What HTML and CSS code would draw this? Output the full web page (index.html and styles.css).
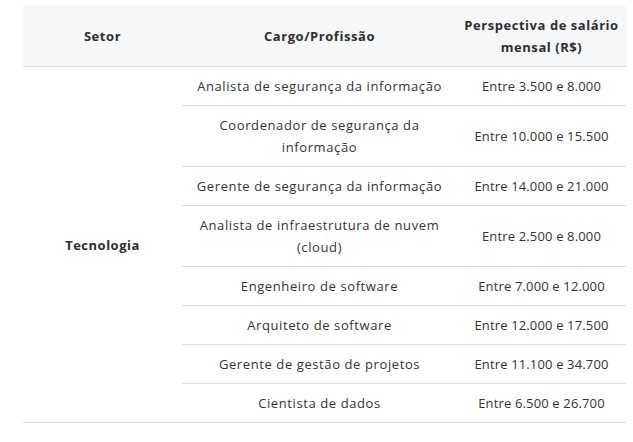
FILE: index.html
```html
<!DOCTYPE html>
<html lang="pt-BR">
<head>
<meta charset="utf-8">
<link rel="stylesheet" href="styles.css">
</head>
<body>
<table class="salary-table">
  <colgroup>
    <col class="col-setor">
    <col class="col-cargo">
    <col class="col-salario">
  </colgroup>
  <thead>
    <tr>
      <th>Setor</th>
      <th>Cargo/Profissão</th>
      <th>Perspectiva de salário<br>mensal (R$)</th>
    </tr>
  </thead>
  <tbody>
    <tr>
      <td class="setor" rowspan="8">Tecnologia</td>
      <td class="cargo">Analista de segurança da informação</td>
      <td class="salario">Entre 3.500 e 8.000</td>
    </tr>
    <tr>
      <td class="cargo">Coordenador de segurança da<br>informação</td>
      <td class="salario">Entre 10.000 e 15.500</td>
    </tr>
    <tr>
      <td class="cargo">Gerente de segurança da informação</td>
      <td class="salario">Entre 14.000 e 21.000</td>
    </tr>
    <tr>
      <td class="cargo">Analista de infraestrutura de nuvem<br>(cloud)</td>
      <td class="salario">Entre 2.500 e 8.000</td>
    </tr>
    <tr>
      <td class="cargo">Engenheiro de software</td>
      <td class="salario">Entre 7.000 e 12.000</td>
    </tr>
    <tr>
      <td class="cargo">Arquiteto de software</td>
      <td class="salario">Entre 12.000 e 17.500</td>
    </tr>
    <tr>
      <td class="cargo">Gerente de gestão de projetos</td>
      <td class="salario">Entre 11.100 e 34.700</td>
    </tr>
    <tr>
      <td class="cargo">Cientista de dados</td>
      <td class="salario">Entre 6.500 e 26.700</td>
    </tr>
  </tbody>
</table>
</body>
</html>
```

FILE: styles.css
```css
html, body {
  margin: 0;
  padding: 0;
  background: #ffffff;
}

body {
  padding: 6px 0 0 23px;
  font-family: "Open Sans", "DejaVu Sans", sans-serif;
  font-size: 13px;
  color: #333333;
}

.salary-table {
  border-collapse: collapse;
  table-layout: fixed;
  width: 603px;
}

.col-setor { width: 159px; }
.col-cargo { width: 275px; }
.col-salario { width: 169px; }

.salary-table th {
  background: #f6f7f9;
  font-weight: 700;
  line-height: 22px;
  padding: 8px 2px 8px;
  height: 44px;
  text-align: center;
  vertical-align: middle;
  border-bottom: 1px solid #dedede;
  color: #2e2e2e;
  letter-spacing: 0.55px;
}

.salary-table td {
  text-align: center;
  vertical-align: middle;
  line-height: 22px;
  padding: 8px 2px 8px;
  border-bottom: 1px solid #dedede;
  font-weight: 400;
}

.salary-table td.cargo {
  letter-spacing: 0.6px;
}

.salary-table td.salario {
  letter-spacing: 0.15px;
}

.salary-table td.setor {
  font-weight: 700;
  letter-spacing: 0.5px;
  color: #2e2e2e;
}
```
